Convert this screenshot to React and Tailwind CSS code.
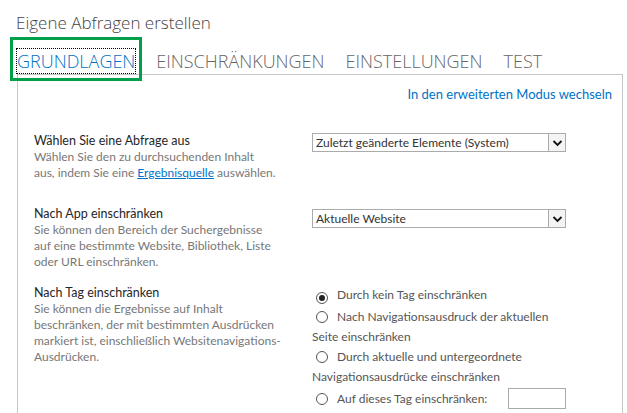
import React from "react";

const font = { fontFamily: '"Open Sans", "Noto Sans", sans-serif' };
const body = { fontFamily: 'Lato, "Open Sans", sans-serif' };

const Select = ({ value, className = "" }) => (
  <div className={`flex items-center h-[19px] w-[254px] border border-[#ababab] bg-white ${className}`}>
    <div className="flex-1 pl-[3px] text-[12px] leading-[17px] text-[#333] truncate">{value}</div>
    <div className="flex items-center justify-center w-[17px] h-[17px] border-l border-[#ababab] bg-[#f4f4f4]">
      <svg width="11" height="8" viewBox="0 0 11 8">
        <path d="M1.5 2 L5.5 6 L9.5 2" fill="none" stroke="#111" strokeWidth="1.8" />
      </svg>
    </div>
  </div>
);

const Radio = ({ checked }) => (
  <span className="inline-flex items-center justify-center w-[12px] h-[12px] rounded-full border border-[#555] ml-[4px] mr-[9px] align-[-2px]">
    {checked && <span className="w-[6px] h-[6px] rounded-full bg-[#222]" />}
  </span>
);

export default function App() {
  return (
    <div className="relative w-[627px] h-[413px] overflow-hidden bg-white" style={font}>
      <div className="pl-[16px] pt-[11px] h-[40px] text-[17px] font-light leading-[24px] text-[#444]">
        Eigene Abfragen erstellen
      </div>

      <div className="flex items-end h-[34px] pl-[17px] pb-[1px] gap-[21px] text-[18px] font-light leading-[24px] text-[#666]">
        <span className="text-[#0072c6] outline-1 outline-dotted outline-black">GRUNDLAGEN</span>
        <span>EINSCHRÄNKUNGEN</span>
        <span>EINSTELLUNGEN</span>
        <span>TEST</span>
      </div>

      <div
        className="ml-[17px] w-[606px] h-[400px] border border-b-0 border-[#c6c6c6] pl-[16px] pr-[10px] pt-[11px] text-[12px] leading-[16px]"
        style={body}
      >
        <div className="text-right text-[13px] text-[#0072c6]">In den erweiterten Modus wechseln</div>

        <div className="grid grid-cols-[278px_254px] mt-[31px]">
          <div className="whitespace-nowrap">
            <div className="text-[#262626] text-[12.5px]">Wählen Sie eine Abfrage aus</div>
            <div className="text-[#777]">
              Wählen Sie den zu durchsuchenden Inhalt
              <br />
              aus, indem Sie eine <span className="text-[#0072c6] underline">Ergebnisquelle</span> auswählen.
            </div>
          </div>
          <Select value="Zuletzt geänderte Elemente (System)" />
        </div>

        <div className="grid grid-cols-[278px_254px] mt-[25px]">
          <div className="whitespace-nowrap">
            <div className="text-[#262626] text-[12.5px]">Nach App einschränken</div>
            <div className="text-[#777]">
              Sie können den Bereich der Suchergebnisse
              <br />
              auf eine bestimmte Website, Bibliothek, Liste
              <br />
              oder URL einschränken.
            </div>
          </div>
          <Select value="Aktuelle Website" className="mt-[3px]" />
        </div>

        <div className="grid grid-cols-[278px_254px] mt-[15px]">
          <div className="whitespace-nowrap">
            <div className="text-[#262626] text-[12.5px]">Nach Tag einschränken</div>
            <div className="text-[#777]">
              Sie können die Ergebnisse auf Inhalt
              <br />
              beschränken, der mit bestimmten Ausdrücken
              <br />
              markiert ist, einschließlich Websitenavigations-
              <br />
              Ausdrücken.
            </div>
          </div>
          <div className="text-[#555] leading-[20px] whitespace-nowrap">
            <div className="mb-[2px]">
              <Radio checked />Durch kein Tag einschränken
            </div>
            <div>
              <Radio />Nach Navigationsausdruck der aktuellen
              <br />
              Seite einschränken
            </div>
            <div>
              <Radio />Durch aktuelle und untergeordnete
              <br />
              Navigationsausdrücke einschränken
            </div>
            <div className="flex items-center mt-[1px]">
              <span>
                <Radio />Auf dieses Tag einschränken:
              </span>
              <span className="ml-auto w-[58px] h-[21px] border border-[#ababab] bg-white" />
            </div>
          </div>
        </div>
      </div>

      <div className="absolute left-[10px] top-[37px] w-[132px] h-[44px] border-[3px] border-[#00a04b]" />
    </div>
  );
}
